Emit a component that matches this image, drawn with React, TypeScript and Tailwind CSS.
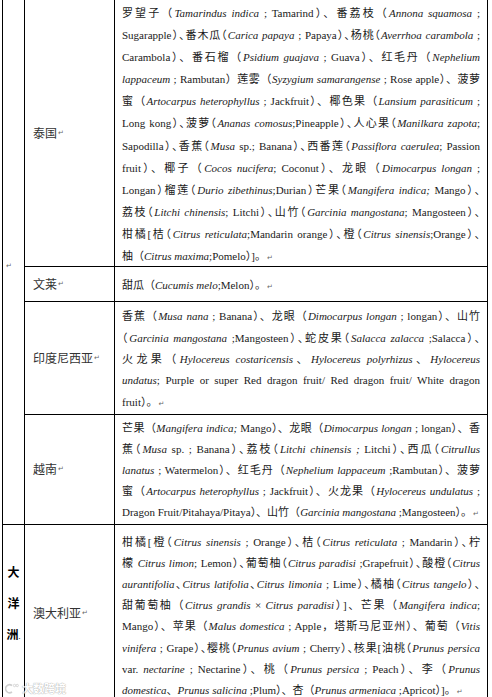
const SERIF = "font-['Liberation_Serif','Noto_Sans_CJK_SC',serif]";
const CJK = /([\u2e80-\u9fff\u3000-\u303f\uff00-\uffef]+)/;

type Row = {
  country: string;
  lines: string[];
  lineH: string;
  pad: string;
};

// a leading "~" marks a line whose brackets are squeezed to half width
const thailand: string[] = [
  "罗望子（*Tamarindus indica* ; Tamarind）、番荔枝（*Annona squamosa* ;",
  "~Sugarapple）、番木瓜（*Carica papaya* ; Papaya）、杨桃（*Averrhoa carambola* ;",
  "Carambola）、番石榴（*Psidium guajava* ; Guava）、红毛丹（*Nephelium*",
  "*lappaceum* ; Rambutan）莲雾（*Syzygium samarangense* ; Rose apple）、菠萝",
  "蜜（*Artocarpus heterophyllus* ; Jackfruit）、椰色果（*Lansium parasiticum* ;",
  "~Long kong）、菠萝（*Ananas comosus*;Pineapple）、人心果（*Manilkara zapota*;",
  "~Sapodilla）、香蕉（*Musa* sp.; Banana）、西番莲（*Passiflora caerulea*; Passion",
  "fruit）、椰子（*Cocos nucifera*; Coconut）、龙眼（*Dimocarpus longan* ;",
  "~Longan）榴莲（*Durio zibethinus*;Durian）芒果（*Mangifera indica;* Mango）、",
  "~荔枝（*Litchi chinensis*; Litchi）、山竹（*Garcinia mangostana*; Mangosteen）、",
  "~柑橘[桔（*Citrus reticulata*;Mandarin orange）、橙（*Citrus sinensis*;Orange）、",
  "柚（*Citrus maxima*;Pomelo）]。",
];

const asiaRows: Row[] = [
  { country: "泰国", lines: thailand, lineH: "h-[22.1px] leading-[22.1px]", pad: "pt-[1px]" },
  { country: "文莱", lines: ["甜瓜（*Cucumis melo*;Melon）。"], lineH: "h-[22px] leading-[22px]", pad: "py-[6px]" },
  {
    country: "印度尼西亚",
    lineH: "h-[21.5px] leading-[21.5px]",
    pad: "pt-[3px] pb-[1px]",
    lines: [
      "香蕉（*Musa nana* ; Banana）、龙眼（*Dimocarpus longan* ; longan）、山竹",
      "~（*Garcinia mangostana* ;Mangosteen）、蛇皮果（*Salacca zalacca* ;Salacca）、",
      "火龙果（*Hylocereus costaricensis*、*Hylocereus polyrhizus*、*Hylocereus*",
      "*undatus*; Purple or super Red dragon fruit/ Red dragon fruit/ White dragon",
      "fruit）。",
    ],
  },
  {
    country: "越南",
    lineH: "h-[21px] leading-[21px]",
    pad: "py-[2px]",
    lines: [
      "芒果（*Mangifera indica;* Mango）、龙眼（*Dimocarpus longan* ; longan）、香",
      "~蕉（*Musa* sp. ; Banana）、荔枝（*Litchi chinensis ;* Litchi）、西瓜（*Citrullus*",
      "*lanatus* ; Watermelon）、红毛丹（*Nephelium lappaceum* ;Rambutan）、菠萝",
      "蜜（*Artocarpus heterophyllus* ; Jackfruit）、火龙果（*Hylocereus undulatus* ;",
      "Dragon Fruit/Pitahaya/Pitaya）、山竹（*Garcinia mangostana* ;Mangosteen）。",
    ],
  },
];

const australia: string[] = [
  "~柑橘[橙（*Citrus sinensis* ; Orange）、桔（*Citrus reticulata* ; Mandarin）、柠",
  "~檬 *Citrus limon*; Lemon）、葡萄柚（*Citrus paradisi* ;Grapefruit）、酸橙（*Citrus*",
  "~*aurantifolia*、*Citrus latifolia*、*Citrus limonia* ; Lime）、橘柚（*Citrus tangelo*）、",
  "甜葡萄柚（*Citrus grandis* × *Citrus paradisi*）]、芒果（*Mangifera indica*;",
  "Mango）、苹果（*Malus domestica* ; Apple，塔斯马尼亚州）、葡萄（*Vitis*",
  "~*vinifera* ; Grape）、樱桃（*Prunus avium* ; Cherry）、核果[油桃（*Prunus persica*",
  "var. *nectarine* ; Nectarine）、桃（*Prunus persica* ; Peach）、李（*Prunus*",
  "*domestica*、*Prunus salicina* ;Plum）、杏（*Prunus armeniaca* ;Apricot）]。",
];

function Mark() {
  return <span className="ml-[1px] not-italic text-[7px] text-[#666] font-['DejaVu_Sans',sans-serif]">↵</span>;
}

// CJK runs are set in the Chinese face
function Run({ text }: { text: string }) {
  return (
    <>
      {text.split(CJK).map((s, i) =>
        i % 2 ? (
          <span key={i} className="not-italic text-[11px] font-['Noto_Sans_CJK_SC',sans-serif]">
            {s}
          </span>
        ) : (
          s
        )
      )}
    </>
  );
}

function Line({ text, last, lineH }: { text: string; last: boolean; lineH: string }) {
  const squeeze = text.startsWith("~");
  const parts = (squeeze ? text.slice(1) : text).split("*");
  return (
    <div
      className={`${lineH} whitespace-nowrap ${last ? "text-left" : "text-justify [text-align-last:justify]"} ${
        squeeze ? "[font-feature-settings:'halt']" : ""
      }`}
    >
      {parts.map((p, i) =>
        i % 2 ? (
          <i key={i}>
            <Run text={p} />
          </i>
        ) : (
          <span key={i}>
            <Run text={p} />
          </span>
        )
      )}
      {last && <Mark />}
    </div>
  );
}

function Content({ lines, lineH, pad }: { lines: string[]; lineH: string; pad: string }) {
  return (
    <div className={`flex-1 min-w-0 flex flex-col justify-center px-[7px] ${pad} text-[11px] text-[#1a1a1a] ${SERIF}`}>
      {lines.map((l, i) => (
        <Line key={i} text={l} lineH={lineH} last={i === lines.length - 1} />
      ))}
    </div>
  );
}

function Country({ name }: { name: string }) {
  return (
    <div className="w-[90px] shrink-0 border-r border-black flex items-center pl-[8px] text-[12px] text-[#333] font-['Noto_Sans_CJK_SC',sans-serif]">
      <span>{name}</span>
      <Mark />
    </div>
  );
}

export default function App() {
  return (
    <div className="relative w-[492px] h-[697px] overflow-hidden bg-white">
      <div className="ml-[2px] w-[486px] border-l border-r border-black">
        {/* Asia block, label cell scrolled above the view */}
        <div className="flex border-b border-black">
          <div className="w-[22px] shrink-0 border-r border-black pt-[250px] pl-[2px]">
            <Mark />
          </div>
          <div className="flex-1 flex flex-col">
            {asiaRows.map((r, i) => (
              <div
                key={r.country}
                className={`flex ${i < asiaRows.length - 1 ? "border-b border-black" : ""} ${
                  r.country === "文莱" ? "min-h-[34px]" : ""
                }`}
              >
                <Country name={r.country} />
                <Content lines={r.lines} lineH={r.lineH} pad={r.pad} />
              </div>
            ))}
          </div>
        </div>

        {/* Oceania */}
        <div className="flex border-b border-black">
          <div className="w-[22px] shrink-0 border-r border-black flex flex-col pt-[31px] items-center text-[12px] leading-[31px] font-bold text-black font-['Noto_Sans_CJK_SC',sans-serif]">
            <span>大</span>
            <span>洋</span>
            <span>
              洲<span className="font-normal text-[7px]">.</span>
            </span>
          </div>
          <div className="flex-1 flex">
            <Country name="澳大利亚" />
            <Content lines={australia} lineH="h-[21.2px] leading-[21.2px]" pad="pt-[6px] pb-[2px]" />
          </div>
        </div>
      </div>

      {/* site watermark */}
      <div className="absolute left-[5px] bottom-[3px] flex items-center gap-[3px] opacity-70">
        <svg width="14" height="11" viewBox="0 0 14 11">
          <path d="M7 2.5A4 4 0 1 0 7 9" fill="none" stroke="#bbb" strokeWidth="1.6" />
          <circle cx="9.5" cy="2.5" r="1.2" fill="none" stroke="#bbb" strokeWidth="0.8" />
          <circle cx="12.2" cy="2.5" r="1.2" fill="none" stroke="#bbb" strokeWidth="0.8" />
        </svg>
        <span className="text-[11px] leading-none text-white font-bold font-['Noto_Sans_CJK_SC',sans-serif] [text-shadow:0_0_1px_#888,0_0_1px_#888]">
          大数跨境
        </span>
      </div>
    </div>
  );
}
